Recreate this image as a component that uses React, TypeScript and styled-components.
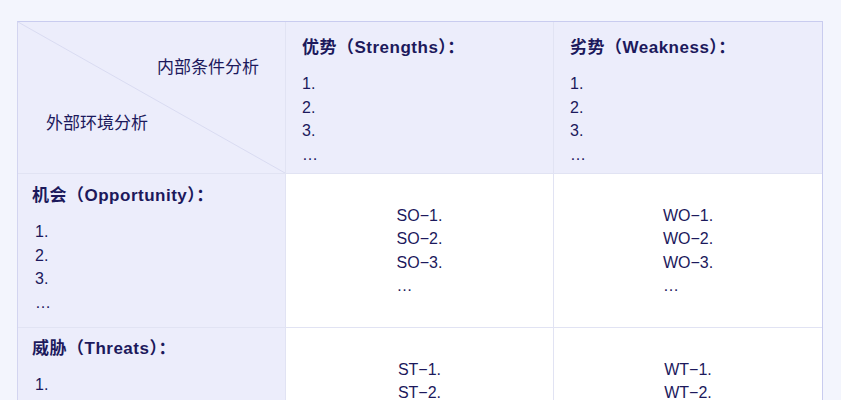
import styled, { createGlobalStyle } from "styled-components";

const GlobalStyle = createGlobalStyle`
  html, body {
    margin: 0;
    padding: 0;
    background: #f3f5fd;
  }
  body {
    font-family: "Liberation Sans", "Noto Sans CJK SC", sans-serif;
    color: #1c195c;
  }
`;

const Page = styled.div`
  padding: 21px 0 0 17px;
  height: 400px;
  box-sizing: border-box;
  overflow: hidden;
`;

const Matrix = styled.div`
  display: grid;
  box-sizing: border-box;
  width: 806px;
  grid-template-columns: 268px 268px 268px;
  grid-template-rows: 152px 154px 154px;
  border-top: 1px solid #c9ccef;
  border-left: 1px solid #d3d5f0;
  border-right: 1px solid #c9ccef;
  background: #ffffff;
`;

const Cell = styled.div<{ $tinted?: boolean; $center?: boolean; $top?: number; $left?: number }>`
  position: relative;
  box-sizing: border-box;
  background: ${(p) => (p.$tinted ? "#ecedfb" : "#ffffff")};
  border-right: 1px solid #e1e3f3;
  border-bottom: 1px solid #e1e3f3;
  padding: ${(p) => (p.$center ? "0" : `${p.$top ?? 14}px 16px 0 ${p.$left ?? 16}px`)};
  display: flex;
  flex-direction: column;
  align-items: ${(p) => (p.$center ? "center" : "stretch")};
  justify-content: ${(p) => (p.$center ? "center" : "flex-start")};
  &:nth-child(3n) {
    border-right: none;
  }
`;

const Corner = styled(Cell)`
  padding: 0;
  overflow: hidden;
`;

const Diagonal = styled.svg`
  position: absolute;
  inset: 0;
  width: 100%;
  height: 100%;
`;

const CornerLabels = styled.div`
  position: relative;
  display: flex;
  flex-direction: column;
  height: 100%;
  padding: 34px 26px 0 28px;
  box-sizing: border-box;
  font-size: 17px;
  line-height: 24px;
`;

const TopLabel = styled.span`
  align-self: flex-end;
`;

const BottomLabel = styled.span`
  margin-top: 32px;
`;

const Heading = styled.div`
  font-size: 17px;
  font-weight: 700;
  line-height: 24px;
  letter-spacing: 0.5px;
  margin-bottom: 12px;
`;

const List = styled.div<{ $indent?: number }>`
  font-size: 16px;
  line-height: 23.5px;
  padding-left: ${(p) => p.$indent ?? 0}px;
`;

const Line = styled.div`
  white-space: pre;
`;

const strategies = {
  SO: ["SO−1.", "SO−2.", "SO−3.", "…"],
  WO: ["WO−1.", "WO−2.", "WO−3.", "…"],
  ST: ["ST−1.", "ST−2.", "ST−3.", "…"],
  WT: ["WT−1.", "WT−2.", "WT−3.", "…"],
};

const numbered = ["1.", "2.", "3.", "…"];

function Lines({ items, indent }: { items: string[]; indent?: number }) {
  return (
    <List $indent={indent}>
      {items.map((t, i) => (
        <Line key={i}>{t}</Line>
      ))}
    </List>
  );
}

export default function App() {
  return (
    <Page>
      <GlobalStyle />
      <Matrix>
        <Corner $tinted>
          <Diagonal viewBox="0 0 268 152" preserveAspectRatio="none">
            <line x1="0" y1="0" x2="268" y2="152" stroke="#d9dbf1" strokeWidth="1" />
          </Diagonal>
          <CornerLabels>
            <TopLabel>内部条件分析</TopLabel>
            <BottomLabel>外部环境分析</BottomLabel>
          </CornerLabels>
        </Corner>
        <Cell $tinted>
          <Heading>优势（Strengths）：</Heading>
          <Lines items={numbered} />
        </Cell>
        <Cell $tinted>
          <Heading>劣势（Weakness）：</Heading>
          <Lines items={numbered} />
        </Cell>

        <Cell $tinted $top={10} $left={14}>
          <Heading>机会（Opportunity）：</Heading>
          <Lines items={numbered} indent={3} />
        </Cell>
        <Cell $center>
          <Lines items={strategies.SO} />
        </Cell>
        <Cell $center>
          <Lines items={strategies.WO} />
        </Cell>

        <Cell $tinted $top={9} $left={14}>
          <Heading>威胁（Threats）：</Heading>
          <Lines items={numbered} indent={3} />
        </Cell>
        <Cell $center>
          <Lines items={strategies.ST} />
        </Cell>
        <Cell $center>
          <Lines items={strategies.WT} />
        </Cell>
      </Matrix>
    </Page>
  );
}
